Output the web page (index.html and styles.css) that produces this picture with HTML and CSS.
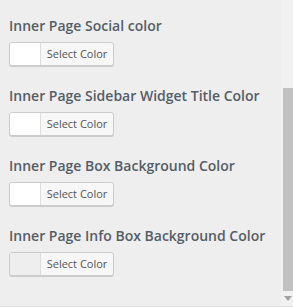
FILE: index.html
```html
<!DOCTYPE html>
<html lang="en">
<head>
  <meta charset="UTF-8">
  <title>Customizer Colors</title>
  <link rel="stylesheet" href="styles.css">
</head>
<body>

<div class="panel">
  <div class="controls">
    <div class="control">
      <span class="control-title">Inner Page Social color</span>
      <button class="color-picker"><span class="swatch"></span><span class="picker-label">Select Color</span></button>
    </div>
    <div class="control">
      <span class="control-title">Inner Page Sidebar Widget Title Color</span>
      <button class="color-picker"><span class="swatch"></span><span class="picker-label">Select Color</span></button>
    </div>
    <div class="control">
      <span class="control-title">Inner Page Box Background Color</span>
      <button class="color-picker"><span class="swatch"></span><span class="picker-label">Select Color</span></button>
    </div>
    <div class="control">
      <span class="control-title">Inner Page Info Box Background Color</span>
      <button class="color-picker"><span class="swatch" style="background-color: #eeeeee;"></span><span class="picker-label">Select Color</span></button>
    </div>
  </div>

  <div class="scrollbar">
    <div class="scroll-thumb"></div>
    <div class="scroll-arrow"></div>
  </div>
</div>

</body>
</html>
```

FILE: styles.css
```css
body {
  margin: 0;
  padding: 0;
  background-color: #eeeeee;
  font-family: "Open Sans", Arial, sans-serif;
}
.panel {
  display: flex;
  height: 306px;
  border-bottom: 1px solid #dddddd;
  overflow: hidden;
}
.controls {
  flex: 1;
  padding: 16px 0 0 9px;
}
.control {
  margin-bottom: 20px;
}
.control-title {
  display: block;
  font-size: 14px;
  font-weight: 600;
  line-height: 20px;
  color: #555d66;
  margin-bottom: 6px;
}
.color-picker {
  display: flex;
  align-items: stretch;
  width: 105px;
  height: 24px;
  padding: 0;
  border: 1px solid #cccccc;
  border-radius: 3px;
  background-color: #f7f7f7;
  box-shadow: 0 1px 0 #cccccc;
  overflow: hidden;
  cursor: pointer;
  font-family: inherit;
}
.swatch {
  width: 30px;
  background-color: #ffffff;
  border-right: 1px solid #dddddd;
}
.picker-label {
  flex: 1;
  font-size: 11px;
  line-height: 22px;
  color: #555555;
  text-align: center;
}
.scrollbar {
  width: 12px;
  display: flex;
  flex-direction: column;
  background-color: #f1f1f1;
  padding: 88px 0 0 2px;
  box-sizing: border-box;
}
.scroll-thumb {
  height: 203px;
  background-color: #c1c1c1;
}
.scroll-arrow {
  margin: 5px auto 0;
  width: 0;
  height: 0;
  border-left: 4px solid transparent;
  border-right: 4px solid transparent;
  border-top: 5px solid #a3a3a3;
}
```
